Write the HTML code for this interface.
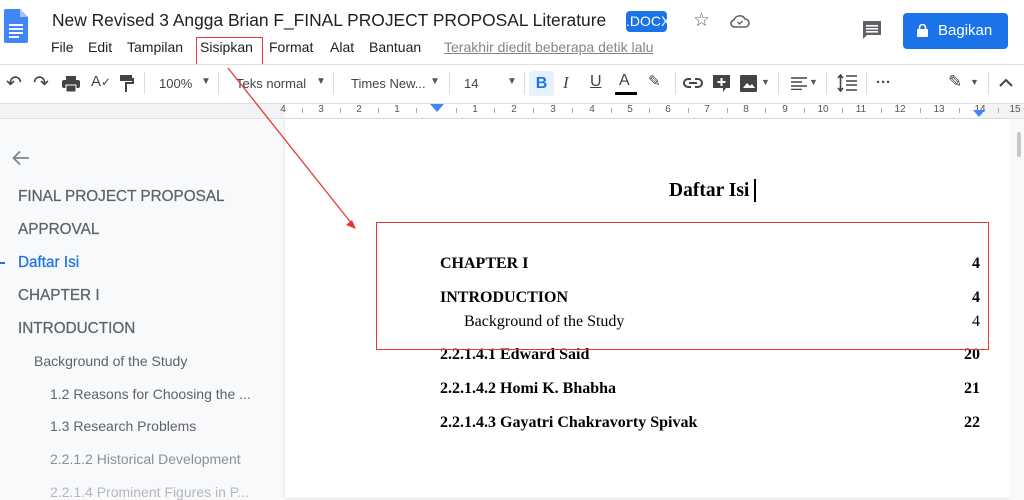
<!DOCTYPE html>
<html><head><meta charset="utf-8"><style>
*{margin:0;padding:0;box-sizing:border-box}
body{width:1024px;height:498px;overflow:hidden;background:#f8f9fa;font-family:"Liberation Sans",Arial,sans-serif;position:relative}
.a{position:absolute;white-space:nowrap}
.m{position:absolute;top:39px;font-size:14px;color:#202124}
.nav{color:#5f6368;font-size:15.3px;-webkit-text-stroke:.25px #5f6368}
.t{font-family:"Liberation Serif",serif;color:#000}
.b{font-weight:bold;font-size:16px}
.ic{position:absolute;color:#444;font-size:17px}
.r{position:absolute;top:104px;font-size:10px;color:#555;transform:translateX(-50%)}
.k{position:absolute;top:108px;width:1px;height:5px;background:#aaa}
</style></head><body>
<div class="a" style="left:0;top:0;width:1024px;height:65px;background:#fff"></div>
<svg class="a" style="left:4px;top:9px" width="24" height="34" viewBox="0 0 24 34"><path d="M2 0h14l8 8v24a2 2 0 0 1-2 2H2a2 2 0 0 1-2-2V2a2 2 0 0 1 2-2z" fill="#4285f4"/><path d="M16 0v8h8z" fill="#a1c2fa"/><rect x="5" y="15" width="14" height="2" fill="#fff"/><rect x="5" y="19" width="14" height="2" fill="#fff"/><rect x="5" y="23" width="14" height="2" fill="#fff"/><rect x="5" y="27" width="10" height="2" fill="#fff"/></svg>
<div class="a" style="left:52px;top:10px;font-size:17.4px;color:#202124">New Revised 3 Angga Brian F_FINAL PROJECT PROPOSAL Literature</div>
<div class="a" style="left:626px;top:11px;width:41px;height:21px;background:#1a73e8;border-radius:4px;color:#fff;font-size:14px;text-align:center;line-height:21px">.DOCX</div>
<div class="a" style="left:693px;top:9px;font-size:19px;color:#5f6368">☆</div>
<svg class="a" style="left:730px;top:13px" width="20" height="16" viewBox="0 0 20 16"><path d="M5 14h10a4 4 0 0 0 0-8 6 6 0 0 0-11 1 3.5 3.5 0 0 0 1 7z" fill="none" stroke="#5f6368" stroke-width="1.6"/><path d="M7.5 9l2 2 3-3" fill="none" stroke="#5f6368" stroke-width="1.4"/></svg>
<svg class="a" style="left:861px;top:20px" width="22" height="22" viewBox="0 0 22 22"><path d="M2 1h18v14H6l-4 4z" fill="#5f6368"/><rect x="5" y="5" width="12" height="1.6" fill="#fff"/><rect x="5" y="8" width="12" height="1.6" fill="#fff"/><rect x="5" y="11" width="12" height="1.6" fill="#fff"/></svg>
<div class="a" style="left:903px;top:13px;width:105px;height:36px;background:#1a73e8;border-radius:4px;color:#fff;font-size:15px;line-height:36px;padding-left:35px">Bagikan</div>
<svg class="a" style="left:917px;top:24px" width="11" height="13" viewBox="0 0 11 13"><rect x="0" y="5" width="11" height="8" rx="1" fill="#fff"/><path d="M2.5 5V3.5a3 3 0 0 1 6 0V5" fill="none" stroke="#fff" stroke-width="1.6"/></svg>
<div class="m" style="left:51px">File</div><div class="m" style="left:88px">Edit</div><div class="m" style="left:127px">Tampilan</div><div class="m" style="left:200px">Sisipkan</div><div class="m" style="left:269px">Format</div><div class="m" style="left:330px">Alat</div><div class="m" style="left:369px">Bantuan</div>
<div class="a" style="left:444px;top:39px;font-size:14px;color:#80868b;text-decoration:underline">Terakhir diedit beberapa detik lalu</div>
<div class="a" style="left:196px;top:37px;width:67px;height:31px;border:1.5px solid #e53935"></div>
<div class="a" style="left:0;top:64px;width:1024px;height:1px;background:#e0e0e0"></div>
<div class="a" style="left:0;top:65px;width:1024px;height:38px;background:#fff"></div>
<div class="ic" style="left:6px;top:72px;font-size:19px">↶</div>
<div class="ic" style="left:33px;top:72px;font-size:19px">↷</div>
<svg class="a" style="left:62px;top:76px" width="18" height="16" viewBox="0 0 18 16"><rect x="4" y="0" width="10" height="4" fill="#444"/><rect x="0" y="4" width="18" height="8" rx="2" fill="#444"/><rect x="4" y="9" width="10" height="7" fill="#444" stroke="#fff" stroke-width="1"/></svg>
<div class="ic" style="left:91px;top:73px;font-size:15px">A<span style="font-size:12px">✓</span></div>
<svg class="a" style="left:120px;top:75px" width="14" height="17" viewBox="0 0 14 17"><rect x="0" y="0" width="12" height="6" fill="#444"/><path d="M12 3h2v6H7v8H5V7h7z" fill="#444"/></svg>
<div class="a" style="left:144px;top:72px;width:1px;height:22px;background:#dadce0"></div>
<div class="a" style="left:159px;top:76px;font-size:13px;color:#444">100%</div><div class="a" style="left:201px;top:76px;font-size:10px;color:#555">▼</div>
<div class="a" style="left:218px;top:72px;width:1px;height:22px;background:#dadce0"></div>
<div class="a" style="left:236px;top:76px;font-size:13px;color:#444">Teks normal</div><div class="a" style="left:316px;top:76px;font-size:10px;color:#555">▼</div>
<div class="a" style="left:333px;top:72px;width:1px;height:22px;background:#dadce0"></div>
<div class="a" style="left:351px;top:76px;font-size:13px;color:#444">Times New...</div><div class="a" style="left:430px;top:76px;font-size:10px;color:#555">▼</div>
<div class="a" style="left:449px;top:72px;width:1px;height:22px;background:#dadce0"></div>
<div class="a" style="left:464px;top:76px;font-size:13px;color:#444">14</div><div class="a" style="left:507px;top:76px;font-size:10px;color:#555">▼</div>
<div class="a" style="left:524px;top:72px;width:1px;height:22px;background:#dadce0"></div>
<div class="a" style="left:529px;top:71px;width:25px;height:25px;background:#e8f0fe;border-radius:3px;color:#1a73e8;font-weight:bold;font-size:16px;text-align:center;line-height:25px">B</div>
<div class="a" style="left:563px;top:73px;font-size:17px;color:#444;font-style:italic;font-family:'Liberation Serif',serif">I</div>
<div class="a" style="left:590px;top:73px;font-size:16px;color:#444;text-decoration:underline">U</div>
<div class="a" style="left:619px;top:72px;font-size:16px;color:#444">A</div>
<div class="a" style="left:615px;top:92px;width:22px;height:3px;background:#000"></div>
<div class="ic" style="left:648px;top:72px;font-size:15px">✎</div>
<div class="a" style="left:675px;top:72px;width:1px;height:22px;background:#dadce0"></div>
<svg class="a" style="left:683px;top:77px" width="20" height="12" viewBox="0 0 20 12"><path d="M8 2H5a4 4 0 0 0 0 8h3M12 2h3a4 4 0 0 1 0 8h-3M6 6h8" fill="none" stroke="#444" stroke-width="2"/></svg>
<svg class="a" style="left:713px;top:75px" width="17" height="17" viewBox="0 0 17 17"><path d="M0 0h17v13h-4l-3 4v-4H0z" fill="#444"/><path d="M8.5 3v8M4.5 7h8" stroke="#fff" stroke-width="2"/></svg>
<svg class="a" style="left:740px;top:75px" width="17" height="17" viewBox="0 0 17 17"><rect width="17" height="17" rx="1" fill="#444"/><path d="M3 13l4-5 3 3 2-2 3 4z" fill="#fff"/></svg>
<div class="a" style="left:761px;top:77px;font-size:9px;color:#555">▼</div>
<div class="a" style="left:778px;top:72px;width:1px;height:22px;background:#dadce0"></div>
<svg class="a" style="left:791px;top:77px" width="16" height="13" viewBox="0 0 16 13"><path d="M0 1h16M0 5h11M0 9h16M0 12.5h11" stroke="#444" stroke-width="1.6"/></svg>
<div class="a" style="left:809px;top:77px;font-size:9px;color:#555">▼</div>
<div class="a" style="left:826px;top:72px;width:1px;height:22px;background:#dadce0"></div>
<svg class="a" style="left:837px;top:74px" width="20" height="18" viewBox="0 0 20 18"><path d="M3.5 1v16M1 4l2.5-3 2.5 3M1 14l2.5 3 2.5-3M9 2h11M9 7h11M9 11h11M9 16h11" stroke="#444" stroke-width="1.6" fill="none"/></svg>
<div class="a" style="left:866px;top:72px;width:1px;height:22px;background:#dadce0"></div>
<div class="a" style="left:876px;top:74px;font-size:15px;color:#444;font-weight:bold">···</div>
<div class="ic" style="left:948px;top:72px;font-size:17px">✎</div>
<div class="a" style="left:970px;top:77px;font-size:9px;color:#555">▼</div>
<div class="a" style="left:988px;top:72px;width:1px;height:22px;background:#dadce0"></div>
<svg class="a" style="left:999px;top:78px" width="14" height="9" viewBox="0 0 14 9"><path d="M1 8l6-6 6 6" fill="none" stroke="#444" stroke-width="2"/></svg>
<div class="a" style="left:0;top:103px;width:1024px;height:15px;background:#f1f3f4;border-top:1px solid #e0e0e0"></div>
<div class="a" style="left:285px;top:104px;width:695px;height:14px;background:#fff"></div>
<div class="a" style="left:0;top:118px;width:1024px;height:1px;background:#e3e3e3"></div>
<div class="r" style="left:283px">4</div><div class="r" style="left:321px">3</div><div class="r" style="left:359px">2</div><div class="r" style="left:397px">1</div>
<div class="r" style="left:475px">1</div><div class="r" style="left:514px">2</div><div class="r" style="left:553px">3</div><div class="r" style="left:592px">4</div><div class="r" style="left:630px">5</div><div class="r" style="left:668px">6</div><div class="r" style="left:707px">7</div><div class="r" style="left:746px">8</div><div class="r" style="left:785px">9</div><div class="r" style="left:823px">10</div><div class="r" style="left:861px">11</div><div class="r" style="left:900px">12</div><div class="r" style="left:939px">13</div><div class="r" style="left:980px">14</div><div class="r" style="left:1015px">15</div>
<div class="k" style="left:302px"></div><div class="k" style="left:340px"></div><div class="k" style="left:378px"></div><div class="k" style="left:416px"></div><div class="k" style="left:456px"></div><div class="k" style="left:494px"></div><div class="k" style="left:533px"></div><div class="k" style="left:572px"></div><div class="k" style="left:611px"></div><div class="k" style="left:649px"></div><div class="k" style="left:688px"></div><div class="k" style="left:727px"></div><div class="k" style="left:765px"></div><div class="k" style="left:804px"></div><div class="k" style="left:842px"></div><div class="k" style="left:881px"></div><div class="k" style="left:920px"></div><div class="k" style="left:959px"></div><div class="k" style="left:998px"></div>
<div class="a" style="left:430px;top:104px;width:0;height:0;border-left:7px solid transparent;border-right:7px solid transparent;border-top:8px solid #4285f4"></div>
<div class="a" style="left:973px;top:110px;width:0;height:0;border-left:6px solid transparent;border-right:6px solid transparent;border-top:7px solid #4285f4"></div>
<svg class="a" style="left:12px;top:150px" width="18" height="16" viewBox="0 0 18 16"><path d="M17 8H2M8 1.5L1.5 8 8 14.5" fill="none" stroke="#80868b" stroke-width="1.8"/></svg>
<div class="a nav" style="left:18px;top:188px">FINAL PROJECT PROPOSAL</div>
<div class="a nav" style="left:18px;top:221px">APPROVAL</div>
<div class="a" style="left:0;top:262px;width:5px;height:1.5px;background:#1a73e8"></div>
<div class="a nav" style="left:18px;top:254px;color:#1a73e8;-webkit-text-stroke:.25px #1a73e8">Daftar Isi</div>
<div class="a nav" style="left:18px;top:287px">CHAPTER I</div>
<div class="a nav" style="left:18px;top:320px">INTRODUCTION</div>
<div class="a nav" style="left:34px;top:353px;font-size:14px;-webkit-text-stroke:0">Background of the Study</div>
<div class="a nav" style="left:50px;top:386px;font-size:14px;-webkit-text-stroke:0">1.2 Reasons for Choosing the ...</div>
<div class="a nav" style="left:50px;top:418px;font-size:14px;-webkit-text-stroke:0">1.3 Research Problems</div>
<div class="a nav" style="left:50px;top:451px;font-size:14px;color:#8c9095;-webkit-text-stroke:0">2.2.1.2 Historical Development</div>
<div class="a nav" style="left:50px;top:484px;font-size:14px;color:#b4b7bb;-webkit-text-stroke:0">2.2.1.4 Prominent Figures in P...</div>
<div class="a" style="left:285px;top:119px;width:725px;height:379px;background:#fff;box-shadow:0 0 2px #ccc"></div>
<div class="a" style="left:1010px;top:119px;width:14px;height:379px;background:#f8f9fa"></div>
<div class="a" style="left:1017px;top:132px;width:4px;height:25px;background:#c6c6c6;border-radius:2px"></div>
<div class="a t" style="left:669px;top:180px;font-size:19.5px;font-weight:bold">Daftar Isi</div>
<div class="a" style="left:754px;top:179px;width:1.5px;height:23px;background:#000"></div>
<div class="a t b" style="left:440px;top:255px">CHAPTER I</div><div class="a t b" style="left:972px;top:255px">4</div>
<div class="a t b" style="left:440px;top:289px">INTRODUCTION</div><div class="a t b" style="left:972px;top:289px">4</div>
<div class="a t" style="left:464px;top:313px;font-size:16px">Background of the Study</div><div class="a t" style="left:972px;top:313px;font-size:16px">4</div>
<div class="a t b" style="left:440px;top:346px">2.2.1.4.1 Edward Said</div><div class="a t b" style="left:964px;top:346px">20</div>
<div class="a t b" style="left:440px;top:380px">2.2.1.4.2 Homi K. Bhabha</div><div class="a t b" style="left:964px;top:380px">21</div>
<div class="a t b" style="left:440px;top:414px">2.2.1.4.3 Gayatri Chakravorty Spivak</div><div class="a t b" style="left:964px;top:414px">22</div>
<div class="a" style="left:376px;top:222px;width:613px;height:128px;border:1.5px solid #e53935"></div>
<svg class="a" style="left:0;top:0" width="1024" height="498"><line x1="228" y1="68" x2="352" y2="224" stroke="#e53935" stroke-width="1.3"/><path d="M356 229l-10-4 6-5z" fill="#e53935"/></svg>
</body></html>
